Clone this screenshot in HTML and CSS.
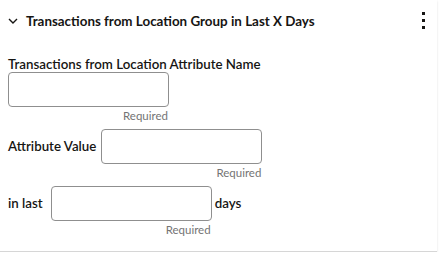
FILE: index.html
```html
<!DOCTYPE html>
<html lang="en">
<head>
    <meta charset="UTF-8">
    <meta name="viewport" content="width=device-width, initial-scale=1.0">
    <title>Transactions from Location Group</title>
    <link rel="stylesheet" href="styles.css">
</head>
<body>
    <div class="card">
        <div class="header">
            <svg class="chevron" width="10" height="6" viewBox="0 0 10 6">
                <path d="M1 1 L5 5 L9 1" fill="none" stroke="#161513" stroke-width="1.4"/>
            </svg>
            <span class="title">Transactions from Location Group in Last X Days</span>
            <span class="kebab">
                <i></i><i></i><i></i>
            </span>
        </div>
        <div class="body">
            <div class="field stacked">
                <label class="label">Transactions from Location Attribute Name</label>
                <div class="control">
                    <input type="text" class="input">
                    <span class="required">Required</span>
                </div>
            </div>
            <div class="field inline">
                <label class="label">Attribute Value</label>
                <div class="control">
                    <input type="text" class="input">
                    <span class="required">Required</span>
                </div>
            </div>
            <div class="field inline">
                <label class="label last">in last</label>
                <div class="control">
                    <input type="text" class="input">
                    <span class="required">Required</span>
                </div>
                <span class="suffix">days</span>
            </div>
        </div>
    </div>
</body>
</html>
```
FILE: styles.css
```css
body {
    margin: 0;
    background-color: #fff;
    font-family: "Lato", "Noto Sans", sans-serif;
    color: #161513;
}
.card {
    width: 437px;
    height: 251px;
    border-bottom: 1px solid #d6d6d6;
    box-shadow: 0 1px 2px rgba(0, 0, 0, 0.12);
}
.header {
    display: flex;
    align-items: center;
    height: 42px;
    padding: 0 0 0 8px;
}
.chevron {
    margin-right: 8px;
}
.title {
    font-size: 13.4px;
    font-weight: 700;
    flex: 1;
}
.kebab {
    display: flex;
    flex-direction: column;
    gap: 4px;
    width: 3px;
    margin-right: 12px;
    margin-top: -2px;
}
.kebab i {
    display: block;
    width: 3px;
    height: 3px;
    background-color: #161513;
}
.body {
    padding: 14px 8px 0 8px;
}
.field {
    display: flex;
}
.stacked {
    flex-direction: column;
    align-items: flex-start;
}
.inline {
    align-items: flex-start;
    margin-top: 4px;
}
.label {
    font-size: 13.3px;
    font-weight: 600;
    line-height: 16px;
}
.inline .label {
    margin-top: 9px;
    margin-right: 5px;
}
.inline .last {
    margin-right: 8px;
}
.control {
    display: flex;
    flex-direction: column;
    align-items: flex-end;
}
.input {
    box-sizing: border-box;
    width: 161px;
    height: 35px;
    border: 1px solid #8f8f8f;
    border-radius: 4px;
    margin: 0;
}
.required {
    font-size: 11.5px;
    line-height: 18px;
    color: #747474;
    padding-right: 1px;
}
.suffix {
    font-size: 13.3px;
    font-weight: 600;
    line-height: 16px;
    margin-top: 9px;
    margin-left: 3px;
}
```
